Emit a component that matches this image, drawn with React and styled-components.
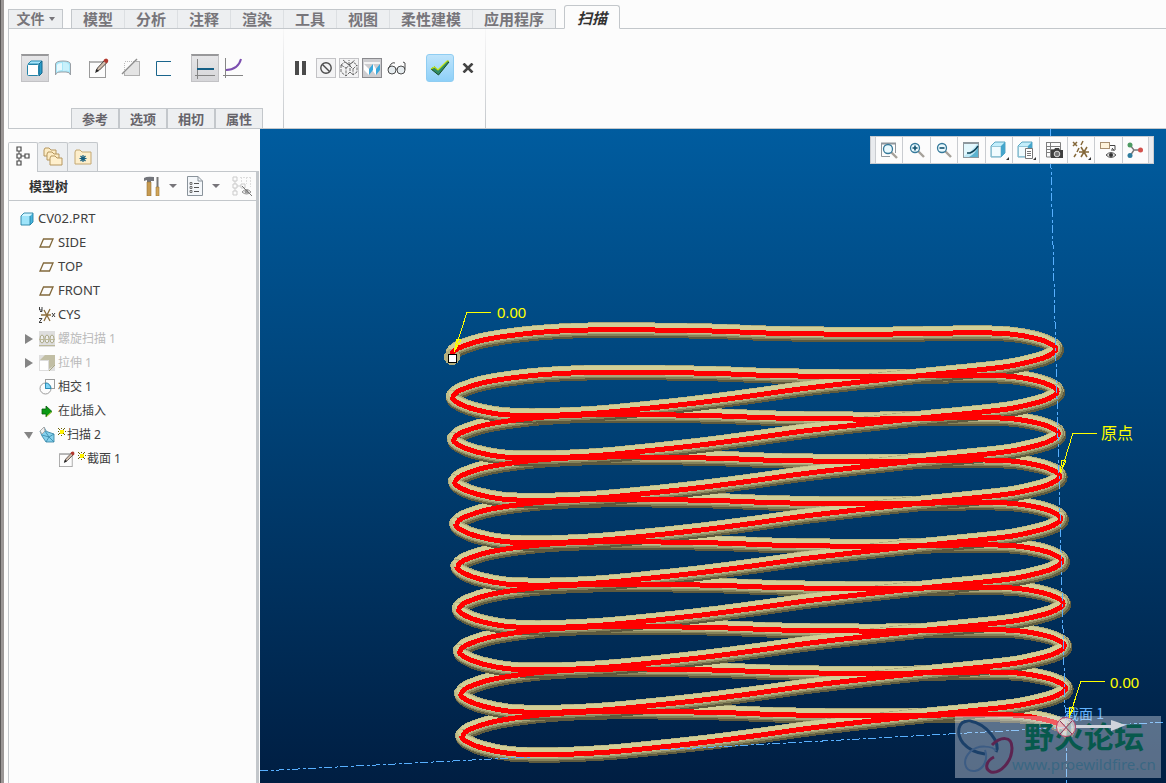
import React from 'react';
import styled, { createGlobalStyle } from 'styled-components';

const GlobalStyle = createGlobalStyle`
  * {
    box-sizing: border-box;
  }

  body {
    margin: 0;
    background: #fcfcfc;
    color: #3c3c3c;
    font-family: 'Noto Sans', 'Noto Sans CJK SC', sans-serif;
    font-size: 12px;
  }

  button {
    margin: 0;
    padding: 0;
    border: 0;
    background: none;
    color: inherit;
    font: inherit;
    cursor: pointer;
  }

  svg {
    display: block;
  }
`;

const Page = styled.div`
  display: flex;
  flex-direction: column;
  min-height: 100vh;
  padding-left: 3px;
  border-left: 1px solid #5b5858;
  background: #fcfcfc;
  box-shadow: inset 3px 0 0 #9b9796;
`;

const TabBar = styled.nav`
  display: flex;
  align-items: flex-end;
  height: 29px;
  padding-left: 4px;
  background: linear-gradient(#c3c7cb, #c3c7cb) 4px 28px no-repeat;
`;

const FileButton = styled.button`
  display: flex;
  align-items: center;
  justify-content: center;
  gap: 4px;
  width: 55px;
  height: 20px;
  margin-right: 8px;
  border: 1px solid #c3c7cb;
  background: #edeff1;
  color: #77757a;
  font-size: 14px;
  font-weight: 700;
  line-height: 18px;
`;

const TabGroup = styled.div`
  display: flex;
  height: 20px;
  margin-right: 8px;
  border: 1px solid #c3c7cb;
  border-left: 0;
  background: #edeff1;
`;

const Tab = styled.button`
  width: ${({ $wide }) => ($wide ? '83px' : '53px')};
  border-left: 1px solid #dcdfe2;
  color: #77757a;
  font-size: 15px;
  font-weight: 700;
  line-height: 17px;

  &:first-child {
    border-left-color: #c3c7cb;
  }
`;

const ActiveTab = styled.button`
  width: 56px;
  height: 24px;
  border: 1px solid #c3c7cb;
  border-bottom-color: #fcfcfc;
  border-radius: 3px 3px 0 0;
  background: #fcfcfc;
  color: #333333;
  font-size: 15px;
  font-style: italic;
  font-weight: 700;
  line-height: 24px;
`;

const Ribbon = styled.section`
  display: flex;
  height: 100px;
  margin-left: 4px;
  border-left: 1px solid #c3c7cb;
  border-bottom: 1px solid #c3c7cb;
`;

const RibbonGroup = styled.div`
  display: flex;
  flex-direction: column;
  justify-content: space-between;
  width: ${({ $width }) => $width};
  padding-top: 25px;
  border-right: 1px solid;
  border-image: linear-gradient(#f8f8f8, #c3c7cb) 1;
  border-image-width: 0 1px 0 0;
`;

const Tools = styled.div`
  display: flex;
  align-items: center;
  height: 28px;
  padding-left: ${({ $start }) => $start};
`;

const ToolSet = styled.div`
  display: flex;
  gap: ${({ $gap }) => $gap || '0'};
  margin-right: ${({ $after }) => $after || '0'};
`;

const ToolButton = styled.button`
  display: flex;
  align-items: center;
  justify-content: center;
  width: 28px;
  height: 28px;
  ${({ $pressed }) =>
    $pressed &&
    `
    border: 1px solid #c2c2c5;
    border-top: 2px solid #98989a;
    background: linear-gradient(#e6e6e8, #d6d6d9);
  `}
`;

const SmallTool = styled.button`
  display: flex;
  align-items: center;
  justify-content: center;
  width: ${({ $wide }) => ($wide ? '24px' : '20px')};
  height: 20px;
  ${({ $framed }) => $framed && 'border: 1px solid #c3c3c6; background: #f3f3f4;'}
  ${({ $pressed }) => $pressed && 'border: 1px solid #8a8a8e; background: #cdcdd0;'}
`;

const AcceptButton = styled.button`
  display: flex;
  align-items: center;
  justify-content: center;
  width: 28px;
  height: 28px;
  border: 1px solid #8fcdf2;
  border-radius: 3px;
  background: linear-gradient(#bfe4fb, #8ed0f8);
`;

const SubTabs = styled.div`
  display: flex;
  height: 20px;
  margin-left: 62px;
`;

const SubTab = styled.button`
  width: 48px;
  border: 1px solid #c3c7cb;
  border-bottom: 0;
  background: #edeff1;
  color: #66646a;
  font-size: 13px;
  font-weight: 700;
  line-height: 18px;
`;

const Workspace = styled.main`
  display: flex;
  flex: 1;
`;

const Sidebar = styled.aside`
  display: flex;
  flex-direction: column;
  width: 256px;
  padding: 13px 1px 0 4px;
`;

const SideTabs = styled.div`
  display: flex;
  height: 29px;
`;

const SideTab = styled.button`
  display: flex;
  align-items: center;
  justify-content: center;
  width: 30px;
  height: ${({ $active }) => ($active ? '30px' : '29px')};
  padding-bottom: ${({ $active }) => ($active ? '3px' : '0')};
  border: 1px solid #c3c7cb;
  border-bottom-width: 0;
  border-radius: 2px 2px 0 0;
  background: ${({ $active }) => ($active ? '#fcfcfc' : '#edeff1')};
  z-index: 1;

  & + & {
    border-left: 0;
  }
`;

const TreePanel = styled.div`
  flex: 1;
  border: 1px solid #c3c7cb;
  border-right-width: 3px;
  border-bottom: 0;
`;

const TreeHeader = styled.header`
  display: flex;
  align-items: center;
  height: 29px;
  padding: 0 4px 0 20px;
  border-bottom: 1px solid #c3c7cb;
`;

const TreeTitle = styled.h2`
  flex: 1;
  margin: 0;
  color: #333333;
  font-size: 13px;
  font-weight: 700;
  line-height: 26px;
`;

const HeaderTool = styled.button`
  display: flex;
  align-items: center;
  gap: 8px;
  margin-left: 9px;

  &:last-child {
    margin-left: 12px;
  }
`;

const Tree = styled.ul`
  margin: 0;
  padding: 6px 0 0;
  list-style: none;
`;

const TreeRow = styled.li`
  display: flex;
  align-items: center;
  height: 24px;
  padding-left: ${({ $level }) => 10 + $level * 20}px;
  color: ${({ $muted }) => ($muted ? '#bababa' : '#404040')};
  font-size: ${({ $latin }) => ($latin ? '13px' : '12px')};
`;

const RowLabel = styled.span`
  height: 24px;
  line-height: ${({ $latin }) => ($latin ? '22px' : '24px')};
`;

const Expander = styled.button`
  width: 10px;
  height: 10px;
  margin: 0 5px 0 -15px;
`;

const RowIcon = styled.span`
  display: flex;
  align-items: center;
  width: 19px;
`;

const NewMark = styled.span`
  width: 9px;
  height: 14px;
`;

const Viewport = styled.section`
  position: relative;
  flex: 1;
  background: linear-gradient(#005c9f, #00447a 40%, #001e42);
`;

const Scene = styled.svg`
  position: absolute;
  width: 100%;
  height: 100%;
`;

const ViewToolbar = styled.div`
  position: absolute;
  top: 7px;
  right: 12px;
  display: grid;
  grid-template-columns: repeat(10, 1fr);
  width: 284px;
  height: 28px;
  padding: 0 4px;
  border: 1px solid #c9ccd0;
  background: #e9ebee;
`;

const ViewButton = styled.button`
  display: flex;
  align-items: center;
  justify-content: center;
  border-left: 1px solid #c9ccd0;
  background: #fcfcfc;

  &:last-child {
    border-right: 1px solid #c9ccd0;
  }
`;

const Icon = ({ w = 20, h = 20, children }) => (
  <svg width={w} height={h} viewBox={`0 0 ${w} ${h}`} fill="none" aria-hidden="true">
    {children}
  </svg>
);

const CaretDown = ({ color = '#77757a', w = 8 }) => (
  <Icon w={w} h={4}>
    <path d={`M0 0H${w}L${w / 2} 4Z`} fill={color} />
  </Icon>
);

/* ribbon icons */

const SolidIcon = () => (
  <Icon>
    <path d="M3 5L6 2H17L14 5Z" fill="#a5e4fa" stroke="#2c8fb5" />
    <path d="M14 5L17 2V14L14 17Z" fill="#2a9cc8" stroke="#14678c" />
    <rect x="2.500" y="5.500" width="11" height="11" rx="1" fill="#fff" stroke="#2483a8" />
  </Icon>
);

const SurfaceIcon = () => (
  <Icon>
    <path
      d="M2.500 6Q3 3 10 3Q17 3 17.500 6V17Q17 14 13 14H8Q3 14 2.500 17Z"
      fill="#a6e6f8"
      stroke="#9aa0a6"
    />
    <path d="M4 7Q5 5 9 5V12Q5 12 4 14Z" fill="#e8f9fe" />
    <path d="M10 4Q14 4 16 7V13Q14 12 10 13Z" fill="#c8f1fc" />
  </Icon>
);

const SketchIcon = ({ size = 20 }) => (
  <svg width={size} height={size} viewBox="0 0 20 20" fill="none" aria-hidden="true">
    <rect x="0.500" y="3.500" width="16" height="16" fill="#fcfcfc" stroke="#9a9a9a" />
    <path d="M1 4H13" stroke="#b5b5b5" strokeWidth="2" />
    <path d="M7 13L8.500 10L15.500 2.500L18 4.500L10.500 12Z" fill="#d3bfae" stroke="#4a4340" />
    <path d="M15 1.500L17 0.500Q20 1 19 4L17.500 5.500L14.500 3Z" fill="#b3392f" />
    <path d="M6 15L7.500 11L10 13Z" fill="#222" />
  </svg>
);

const ThinIcon = () => (
  <Icon>
    <rect x="3.500" y="3.500" width="15" height="14" fill="#e4e4e4" stroke="#b0b0b0" />
    <path d="M1 3V17L16 2Z" fill="#fcfcfc" />
    <path d="M3.500 5V12M4 3.500H13" stroke="#bcbcbc" strokeDasharray="1 1" />
    <path d="M1 16L16 1" stroke="#8d8d8d" strokeWidth="1.400" />
  </Icon>
);

const OpenIcon = () => (
  <Icon>
    <path d="M18 3.500H3.500V17.500H18" stroke="#1a658c" />
  </Icon>
);

const ConstantIcon = () => (
  <Icon>
    <path d="M2.500 0V20M0 16.500H20" stroke="#858585" />
    <path d="M2 10H19" stroke="#155f86" strokeWidth="2" />
  </Icon>
);

const VariableIcon = () => (
  <Icon>
    <path d="M2.500 0V20M0 17.500H20" stroke="#858585" />
    <path d="M3 12Q15 12 18 1" stroke="#7c4fb0" strokeWidth="2" />
  </Icon>
);

const PauseIcon = () => (
  <Icon w={12} h={14}>
    <path d="M0 0H4V14H0ZM7 0H11V14H7Z" fill="#4b4b4b" />
  </Icon>
);

const NoPreviewIcon = () => (
  <Icon w={14} h={14}>
    <circle cx="7" cy="7" r="5.200" stroke="#4c4c4c" strokeWidth="1.400" />
    <path d="M3.500 3.500L10.500 10.500" stroke="#4c4c4c" strokeWidth="1.400" />
  </Icon>
);

const WireIcon = () => (
  <Icon w={18} h={18}>
    <path
      d="M1 6L5 3L9 6L13 3L17 6M1 6V13L6 17V9L1 6M6 9L10 6V13L6 17M10 7L13 10V16L10 13M13 10L17 6V13L13 16M3 1L9 6L15 1M9 6V1"
      stroke="#4d4d4d"
      strokeWidth="0.800"
      strokeDasharray="3 1"
    />
  </Icon>
);

const AttachedIcon = () => (
  <Icon w={18} h={18}>
    <path d="M1 3H17V5H1Z" fill="#f3f3f3" />
    <path d="M1 5L6 10V16L1 11ZM10 5L13 10V16L9 11Z" fill="#fff" />
    <path d="M6 10L10 5V11L6 16ZM13 10L17 5V11L13 16Z" fill="#38a8dc" />
  </Icon>
);

const GlassesIcon = () => (
  <Icon w={20} h={14}>
    <circle cx="5" cy="9" r="4" fill="#e6ecef" stroke="#4d4d4d" />
    <circle cx="14" cy="9" r="4" fill="#e6ecef" stroke="#4d4d4d" />
    <path d="M9 8.500Q9.500 7 10 8.500M1 8L4 3Q6 1 8 2M18 8.500V2L16 1" stroke="#4d4d4d" />
  </Icon>
);

const CheckIcon = () => (
  <Icon>
    <path d="M1 11L4.500 9L8 12L17 3L19 4L8.500 17Z" fill="#2f8a66" stroke="#194d24" />
    <path d="M1 11L4.500 9L8 12L17 3H19" stroke="#c8ea18" strokeWidth="1.200" />
  </Icon>
);

const CloseIcon = () => (
  <Icon w={12} h={10}>
    <path d="M1.500 0.500L10.500 9.500M10.500 0.500L1.500 9.500" stroke="#444" strokeWidth="2.600" />
  </Icon>
);

/* model tree icons */

const TreeIcon = () => (
  <Icon w={14} h={20}>
    <path d="M3 5V8M3 12V15M5 10H9" stroke="#4a4a4a" />
    <path d="M1 1H5V5H1ZM1 8H5V12H1ZM1 15H5V19H1ZM9 8H13V12H9Z" stroke="#4a4a4a" strokeWidth="1.200" />
  </Icon>
);

const folderPath = (x, y, w, h) =>
  `M${x} ${y + h}V${y + 2}L${x + 1} ${y}H${x + 5}L${x + 7} ${y + 2}H${x + w}V${y + h}Z`;

const FoldersIcon = () => (
  <Icon>
    <path d={folderPath(1, 1, 12, 8)} fill="#fdecc4" stroke="#b6975f" />
    <path d={folderPath(4, 5, 12, 8)} fill="#fdecc4" stroke="#b6975f" />
    <path d={folderPath(7, 9, 12, 9)} fill="#fff0cd" stroke="#b6975f" />
  </Icon>
);

const FavoritesIcon = () => (
  <Icon w={18} h={18}>
    <path d={folderPath(1, 2, 16, 14)} fill="#fdeecb" stroke="#c4a873" />
    <path d="M9 7V14M5.500 10.500H12.500M6.500 8L11.500 13M11.500 8L6.500 13" stroke="#175f80" strokeWidth="1.200" />
  </Icon>
);

const HammerIcon = () => (
  <Icon w={18} h={20}>
    <path d="M1 2Q4 0 11 1V5H8V6H4V4L1 5Z" fill="#73757b" />
    <path d="M4 6H8V20H4Z" fill="#c69a50" stroke="#987438" strokeWidth="0.600" />
    <path d="M14.500 1V11" stroke="#777" strokeWidth="2" />
    <path d="M13 11H16V20H13Z" fill="#d2a558" stroke="#9a7638" strokeWidth="0.600" />
  </Icon>
);

const SettingsIcon = () => (
  <Icon w={18} h={20}>
    <path d="M1.500 0.500H12L16.500 5V19.500H1.500Z" fill="#f4f7fa" stroke="#8a939b" />
    <path d="M12 0.500V5H16.500" stroke="#8a939b" />
    <path d="M8 7.500H13M8 11.500H13M8 15.500H13" stroke="#555" />
    <path d="M4 6.500H6V8.500H4ZM4 10.500H6V12.500H4ZM4 14.500H6V16.500H4Z" stroke="#555" strokeWidth="0.800" />
  </Icon>
);

const TreeColumnsIcon = () => (
  <Icon w={20} h={20}>
    <path d="M1 1H5V5H1ZM1 8H5V12H1ZM1 15H5V19H1ZM9 8H13V12H9ZM3 5V8M3 12V15M5 10H9" stroke="#cbcbcb" />
    <path d="M8 1.500H19M9.500 1V6M14.500 1V8M18.500 1V11" stroke="#dedede" strokeDasharray="2 1" />
    <path d="M10 16Q14.500 11 19 16Q14.500 20 10 16Z" stroke="#909090" />
    <circle cx="14.500" cy="15.500" r="2" fill="#9a9a9a" />
    <path d="M10 10L20 20" stroke="#777" />
  </Icon>
);

const PartIcon = () => (
  <Icon w={15} h={14}>
    <path d="M2 4L5 1H14L11 4Z" fill="#d0f5ff" />
    <path d="M11 4L14 1V10L11 13Z" fill="#48b5de" />
    <path d="M2 4H11V13H2Z" fill="#9ee4fa" />
    <path d="M2 4L5 1H14V10L11 13H2ZM11 4V13" stroke="#2482a5" strokeWidth="0.900" />
  </Icon>
);

const PlaneIcon = () => (
  <Icon w={16} h={10}>
    <path d="M4.500 1H14L10.500 9H1Z" stroke="#81683b" strokeWidth="1.300" />
  </Icon>
);

const CsysIcon = () => (
  <Icon w={17} h={16}>
    <path d="M2 8H12M5 3L11 14M11 2L5 14" stroke="#8c6d3c" strokeWidth="1.300" />
    <path d="M0.500 0V3H3M3 0V4.500H1M0 11.500H3L0 15.500H3M13 6L16 10M16 6L13 10" stroke="#3c3c3c" />
  </Icon>
);

const HelixIcon = () => (
  <Icon w={16} h={16}>
    <rect width="16" height="16" fill="#dedede" />
    {[3, 8, 13].map((cx) => (
      <ellipse key={cx} cx={cx} cy="8" rx="2" ry="4" fill="#eee" stroke="#aaa785" />
    ))}
    <path d="M0 8.500H16M0 14.500H16" stroke="#bcb99a" />
  </Icon>
);

const ExtrudeIcon = () => (
  <Icon w={16} h={16}>
    <rect width="16" height="16" fill="#dfdfdf" />
    <path d="M6 0H16V10L10 14V5H1Z" fill="#c1bea4" />
    <rect x="0.500" y="5.500" width="9" height="10" fill="#fff" stroke="#ddd" />
    <path d="M10 16L16 10" stroke="#aaa784" />
  </Icon>
);

const IntersectIcon = () => (
  <Icon w={16} h={16}>
    <rect x="6.500" y="0.500" width="9" height="9" stroke="#9c9c9c" />
    <circle cx="6.500" cy="9.500" r="5.500" stroke="#9c9c9c" />
    <path d="M6.500 9.500V4Q11 4 12 9.500Z" fill="#7fd3f5" stroke="#2c8eb8" />
  </Icon>
);

const InsertIcon = () => (
  <Icon w={14} h={14}>
    <path d="M3 5H7V2L13 7.500L7 13V10H3Z" fill="#0b9a14" stroke="#085c0d" strokeWidth="0.800" />
    <path d="M7.500 12.500L12.500 8" stroke="#b8d930" />
  </Icon>
);

const SweepIcon = () => (
  <Icon w={17} h={16}>
    <path d="M1 4L5 0L7 4L9 5L15 7V15H7L3 9Z" fill="#86d0ec" stroke="#2f7d9e" strokeWidth="0.800" />
    <path d="M1 4L5 0L6 4L3 7Z" fill="#f0f0f0" stroke="#aaa" />
    <path d="M6 4L10 10L15 7M10 10L7 15M10 10L15 15M3 8L10 10" stroke="#3586a8" strokeWidth="0.800" />
  </Icon>
);

const NewMarkIcon = () => (
  <Icon w={8} h={8}>
    <path d="M2 2H6V6H2Z" fill="#fff200" />
    <path d="M3.500 0V1M3.500 7V8M0 3.500H1M7 3.500H8M0 0L2 2M7 0L5 2M0 7L2 5M7 7L5 5" stroke="#6b6100" />
  </Icon>
);

/* view toolbar icons */

const Lens = ({ x, y }) => (
  <>
    <path d={`M${x + 3} ${y + 3}L${x + 9} ${y + 9}`} stroke="#a5a19a" strokeWidth="2.400" />
    <circle cx={x} cy={y} r="4.500" fill="#e9f9fe" stroke="#35799a" strokeWidth="1.300" />
  </>
);

const ZoomFitIcon = () => (
  <Icon w={18} h={18}>
    <path d="M15.500 12V2.500H1.500V15.500H10" stroke="#8f969c" />
    <path d="M1 2.500H16" stroke="#8f969c" strokeWidth="2" />
    <Lens x={8} y={8} />
  </Icon>
);

const ZoomInIcon = () => (
  <Icon w={18} h={18}>
    <Lens x={7} y={7} />
    <path d="M7 4.500V9.500M4.500 7H9.500" stroke="#12516f" strokeWidth="1.600" />
  </Icon>
);

const ZoomOutIcon = () => (
  <Icon w={18} h={18}>
    <Lens x={7} y={7} />
    <path d="M4.500 7H9.500" stroke="#12516f" strokeWidth="1.600" />
  </Icon>
);

const RepaintIcon = () => (
  <Icon w={18} h={18}>
    <rect x="1.500" y="1.500" width="15" height="15" fill="#bfe9f7" stroke="#8e989e" />
    <path d="M1 2H17" stroke="#8e989e" strokeWidth="2" />
    <path d="M2 16H7Q14 12 16 6V16Z" fill="#5bb2cf" />
    <path d="M2 3H15Q10 10 2 15Z" fill="#e2f7fd" />
    <path d="M5 12H8Q13 10 16 5" stroke="#0e4156" strokeWidth="1.500" />
  </Icon>
);

const BoxIcon = ({ list }) => (
  <Icon>
    <path d="M2 6L6 2H16V13L12 17H2Z" fill="#c3eefb" stroke="#3a93b3" strokeWidth="0.800" />
    <path d="M2.500 6.500H12V16.500H2.500Z" fill="#f0fbfe" stroke="#83bacd" strokeWidth="0.800" />
    <path d="M12 6L16 2V13L12 17Z" fill="#45a5cb" />
    {list && (
      <>
        <path d="M9.500 8.500H16.500V18.500H9.500Z" fill="#fff" stroke="#777" />
        <path d="M11 11.500H15M11 13.500H15M11 15.500H15" stroke="#777" />
      </>
    )}
    <path d="M20 17V20H17Z" fill="#333" />
  </Icon>
);

const CaptureIcon = () => (
  <Icon w={18} h={18}>
    <path d="M1 1.500H15.500V9M1.500 1V16H6M1 5.500H15M1 8.500H10M1 11.500H6M5.500 2V16" stroke="#7f7f7f" />
    <path d="M6 9H9L10 7H14L15 9H18V17H6Z" fill="#3f3f3f" />
    <circle cx="12" cy="13" r="2.800" fill="#777" stroke="#ddd" />
  </Icon>
);

const DatumIcon = () => (
  <Icon>
    <path d="M2 2L6 6M6 2L2 6M12 1L10 5M8 8L6 12M5 14L3 17M8 12H18M10 7L16 17M16 7L10 17" stroke="#84683a" strokeWidth="1.500" />
    <path d="M20 17V20H17Z" fill="#333" />
  </Icon>
);

const AnnotationIcon = () => (
  <Icon w={18} h={18}>
    <rect x="1.500" y="1.500" width="9" height="6" fill="#fff4dc" stroke="#a89071" />
    <path d="M11 4.500H16V9M13 7L15.500 10M12 9H15" stroke="#444" />
    <path d="M7 14Q12 9 17 14Q12 19 7 14Z" fill="#ddd" stroke="#555" />
    <circle cx="12" cy="14" r="2" fill="#333" />
  </Icon>
);

const SpinIcon = () => (
  <Icon w={18} h={18}>
    <path d="M4 4L8 9L4 15M8 9H14" stroke="#777" strokeWidth="1.400" />
    <circle cx="4" cy="4" r="2.500" fill="#4d9a62" />
    <circle cx="14.500" cy="9" r="2.500" fill="#d3514c" />
    <circle cx="4" cy="14.500" r="2.500" fill="#2e7d9e" />
  </Icon>
);

/* spring geometry, one turn split at its left and right ends */

const BACK = [
  [452, 355], [454, 351], [461, 347], [480, 340.8], [507, 336], [540, 332.3], [580, 330.2],
  [636, 329.8], [712, 331], [773, 333.2], [863, 334.3], [918, 333.6], [980, 332.8], [1010, 334],
  [1033, 337.8], [1048, 342.6], [1056, 349],
];

const FRONT = [
  [1056, 349], [1048, 356], [1033, 361], [1007, 366.5], [967, 371], [920, 375.6], [860, 382],
  [800, 389], [750, 396], [700, 402.5], [650, 408], [600, 412.8], [560, 415], [530, 415.5],
  [500, 414.3], [475, 409.5], [459, 403.5], [452, 397],
];

const TURNS = 9;

const distance = (a, b) => Math.hypot(a[0] - b[0], a[1] - b[1]);

const turnPath = (points, turn) => {
  const p = points.map(([x, y]) => [x + turn * 1.2, y + turn * 42.4]);
  let d = `M${p[0][0]} ${p[0][1]}`;
  for (let i = 0; i < p.length - 1; i++) {
    const b = p[i];
    const c = p[i + 1];
    const length = distance(b, c);
    // keep the tangent vertical where a half meets its other half
    let c1 = [b[0], b[1] + (c[1] - b[1]) / 2];
    let c2 = [c[0], c[1] - (c[1] - b[1]) / 2];
    if (i > 0) {
      const a = p[i - 1];
      const t = length / (distance(a, b) + length) / 3;
      c1 = [b[0] + (c[0] - a[0]) * t, b[1] + (c[1] - a[1]) * t];
    }
    if (i < p.length - 2) {
      const e = p[i + 2];
      const t = length / (distance(c, e) + length) / 3;
      c2 = [c[0] - (e[0] - b[0]) * t, c[1] - (e[1] - b[1]) * t];
    }
    d += `C${c1.join(' ')} ${c2.join(' ')} ${c.join(' ')}`;
  }
  return d;
};

const TUBE = [
  { color: '#5e5a3e', width: 14, dx: 1, dy: 1 },
  { color: '#aaa77b', width: 13, dx: 0, dy: -1 },
  { color: '#868259', width: 12, dx: 0, dy: 0 },
  { color: '#a9a67a', width: 11, dx: -1, dy: -1 },
  { color: '#c2bf8b', width: 10, dx: -1, dy: -2 },
  { color: '#d2cf97', width: 5, dx: -1, dy: -4 },
];

const Tube = ({ d }) => (
  <g strokeLinecap="round">
    {TUBE.map((layer) => (
      <path
        key={layer.color}
        d={d}
        stroke={layer.color}
        strokeWidth={layer.width}
        transform={`translate(${layer.dx} ${layer.dy})`}
      />
    ))}
  </g>
);

const Spring = () => {
  const backs = Array.from({ length: TURNS + 1 }, (_, i) => turnPath(BACK, i));
  const fronts = Array.from({ length: TURNS }, (_, i) => turnPath(FRONT, i));

  return (
    <g shapeRendering="crispEdges">
      {backs.map((d) => <Tube key={d} d={d} />)}
      {fronts.map((d) => <Tube key={d} d={d} />)}
      <circle cx="452" cy="357" r="8" fill="#b3af7e" />
      {[...backs, ...fronts].map((d) => (
        <path key={d} d={d} stroke="#ff0000" strokeWidth="5" />
      ))}
    </g>
  );
};

const Watermark = () => (
  <g>
    <rect x="955" y="716" width="206" height="62" fill="#dfe3ee" fillOpacity="0.4" />
    <path
      d="M996 752C1001 743 987 724 970 721C957 720 956 734 963 743C969 750 977 753 985 754"
      stroke="#1b4069"
      strokeWidth="3"
    />
    <path
      d="M996 751C993 746 978 744 970 752C962 760 964 772 975 771C985 769 988 758 985 750"
      stroke="#3c5c84"
      strokeWidth="2"
    />
    <path
      d="M992 745C1000 737 1012 735 1012 748C1012 762 1000 774 991 772C984 769 986 761 994 757"
      stroke="#5c2450"
      strokeWidth="3"
    />
    <text x="1024" y="748" fill="#07594d" fontSize="30" fontWeight="700" fontFamily="Noto Sans CJK SC, sans-serif">
      野火论坛
    </text>
    <text x="1012" y="770" fill="#396783" fontSize="15" fontFamily="Noto Sans, sans-serif">
      www.proewildfire.cn
    </text>
  </g>
);

const ModelScene = () => (
  <Scene viewBox="260 129 906 654" preserveAspectRatio="xMinYMin slice" fill="none" role="img" aria-label="CV02.PRT">
    <Spring />
    <g stroke="#58b0ff" strokeDasharray="8 3 3 2" shapeRendering="crispEdges">
      <path d="M260 771L530 757M660 750L1166 722" />
      <path d="M1050 129L1067 783" />
    </g>
    <text x="1065" y="719" fill="#63b4ff" fontSize="14" fontFamily="Noto Sans CJK SC, sans-serif">
      截面 1
    </text>
    <Watermark />
    <g>
      <path d="M1076 725H1111V720L1126 725L1111 731V728H1076Z" fill="#d0d3dc" />
      <circle cx="1066" cy="727" r="9.500" fill="#e6e0e0" fillOpacity="0.700" stroke="#b9436a" />
      <path d="M1060 721L1072 734M1072 721L1060 734" stroke="#8b2f50" />
    </g>
    <g stroke="#ffff00" shapeRendering="crispEdges">
      <path d="M455 350L467 312H491M1061 472L1073 433H1097M1069 718L1081 681H1105" />
      <path d="M454 352L457 339L461 340ZM1060 473L1062 460L1066 461ZM1069 717L1070 707L1074 708Z" />
    </g>
    <g fill="#ffff00" fontFamily="Liberation Sans, Noto Sans CJK SC, sans-serif" fontSize="15">
      <text x="497" y="318">0.00</text>
      <text x="1101" y="439" fontSize="16">原点</text>
      <text x="1110" y="688">0.00</text>
    </g>
    <rect x="448.500" y="354.500" width="8" height="8" fill="#fff" stroke="#000" />
  </Scene>
);

const menuTabs = [
  { label: '模型' },
  { label: '分析' },
  { label: '注释' },
  { label: '渲染' },
  { label: '工具' },
  { label: '视图' },
  { label: '柔性建模', wide: true },
  { label: '应用程序', wide: true },
];

const treeItems = [
  { label: 'CV02.PRT', level: 0, icon: <PartIcon />, latin: true },
  { label: 'SIDE', level: 1, icon: <PlaneIcon />, latin: true },
  { label: 'TOP', level: 1, icon: <PlaneIcon />, latin: true },
  { label: 'FRONT', level: 1, icon: <PlaneIcon />, latin: true },
  { label: 'CYS', level: 1, icon: <CsysIcon />, latin: true },
  { label: '螺旋扫描 1', level: 1, icon: <HelixIcon />, muted: true, state: 'closed' },
  { label: '拉伸 1', level: 1, icon: <ExtrudeIcon />, muted: true, state: 'closed' },
  { label: '相交 1', level: 1, icon: <IntersectIcon /> },
  { label: '在此插入', level: 1, icon: <InsertIcon /> },
  { label: '扫描 2', level: 1, icon: <SweepIcon />, state: 'open', isNew: true },
  { label: '截面 1', level: 2, icon: <SketchIcon size={16} />, isNew: true },
];

const viewTools = [
  { label: '重新调整', icon: <ZoomFitIcon /> },
  { label: '放大', icon: <ZoomInIcon /> },
  { label: '缩小', icon: <ZoomOutIcon /> },
  { label: '重画', icon: <RepaintIcon /> },
  { label: '显示样式', icon: <BoxIcon /> },
  { label: '已保存方向', icon: <BoxIcon list /> },
  { label: '视图管理器', icon: <CaptureIcon /> },
  { label: '基准显示', icon: <DatumIcon /> },
  { label: '注释显示', icon: <AnnotationIcon /> },
  { label: '旋转中心', icon: <SpinIcon /> },
];

const App = () => (
  <>
    <GlobalStyle />
    <Page>
      <TabBar>
        <FileButton>
          文件 <CaretDown w={6} />
        </FileButton>
        <TabGroup>
          {menuTabs.map((tab) => (
            <Tab key={tab.label} $wide={tab.wide}>{tab.label}</Tab>
          ))}
        </TabGroup>
        <ActiveTab>扫描</ActiveTab>
      </TabBar>

      <Ribbon>
        <RibbonGroup $width="275px">
          <Tools $start="12px">
            <ToolSet $after="8px">
              <ToolButton $pressed aria-label="实体"><SolidIcon /></ToolButton>
              <ToolButton aria-label="曲面"><SurfaceIcon /></ToolButton>
            </ToolSet>
            <ToolSet $gap="4px" $after="14px">
              <ToolButton aria-label="草绘"><SketchIcon /></ToolButton>
              <ToolButton aria-label="移除材料"><ThinIcon /></ToolButton>
              <ToolButton aria-label="薄板"><OpenIcon /></ToolButton>
            </ToolSet>
            <ToolSet>
              <ToolButton $pressed aria-label="恒定截面"><ConstantIcon /></ToolButton>
              <ToolButton aria-label="可变截面"><VariableIcon /></ToolButton>
            </ToolSet>
          </Tools>
          <SubTabs>
            <SubTab>参考</SubTab>
            <SubTab>选项</SubTab>
            <SubTab>相切</SubTab>
            <SubTab>属性</SubTab>
          </SubTabs>
        </RibbonGroup>

        <RibbonGroup $width="202px">
          <Tools $start="7px">
            <ToolSet $after="5px">
              <SmallTool aria-label="暂停"><PauseIcon /></SmallTool>
            </ToolSet>
            <ToolSet $gap="3px" $after="17px">
              <SmallTool $framed aria-label="无预览"><NoPreviewIcon /></SmallTool>
              <SmallTool $framed aria-label="分离"><WireIcon /></SmallTool>
              <SmallTool $pressed aria-label="连接"><AttachedIcon /></SmallTool>
              <SmallTool $wide aria-label="特征预览"><GlassesIcon /></SmallTool>
            </ToolSet>
            <AcceptButton aria-label="确定"><CheckIcon /></AcceptButton>
            <ToolButton aria-label="取消"><CloseIcon /></ToolButton>
          </Tools>
        </RibbonGroup>
      </Ribbon>

      <Workspace>
        <Sidebar>
          <SideTabs>
            <SideTab $active aria-label="模型树"><TreeIcon /></SideTab>
            <SideTab aria-label="文件夹浏览器"><FoldersIcon /></SideTab>
            <SideTab aria-label="收藏夹"><FavoritesIcon /></SideTab>
          </SideTabs>
          <TreePanel>
            <TreeHeader>
              <TreeTitle>模型树</TreeTitle>
              <HeaderTool aria-label="设置">
                <HammerIcon />
                <CaretDown />
              </HeaderTool>
              <HeaderTool aria-label="显示">
                <SettingsIcon />
                <CaretDown />
              </HeaderTool>
              <HeaderTool aria-label="树列"><TreeColumnsIcon /></HeaderTool>
            </TreeHeader>
            <Tree>
              {treeItems.map((item) => (
                <TreeRow key={item.label} $level={item.level} $muted={item.muted} $latin={item.latin}>
                  {item.state && (
                    <Expander aria-label={item.label} aria-expanded={item.state === 'open'}>
                      <Icon w={10} h={10}>
                        <path d={item.state === 'open' ? 'M0 2H9L5 9Z' : 'M1 0L9 5L1 10Z'} fill="#858585" />
                      </Icon>
                    </Expander>
                  )}
                  <RowIcon>{item.icon}</RowIcon>
                  {item.isNew && <NewMark><NewMarkIcon /></NewMark>}
                  <RowLabel $latin={item.latin}>{item.label}</RowLabel>
                </TreeRow>
              ))}
            </Tree>
          </TreePanel>
        </Sidebar>

        <Viewport>
          <ModelScene />
          <ViewToolbar role="toolbar" aria-label="视图">
            {viewTools.map((tool) => (
              <ViewButton key={tool.label} aria-label={tool.label}>{tool.icon}</ViewButton>
            ))}
          </ViewToolbar>
        </Viewport>
      </Workspace>
    </Page>
  </>
);

export default App;
